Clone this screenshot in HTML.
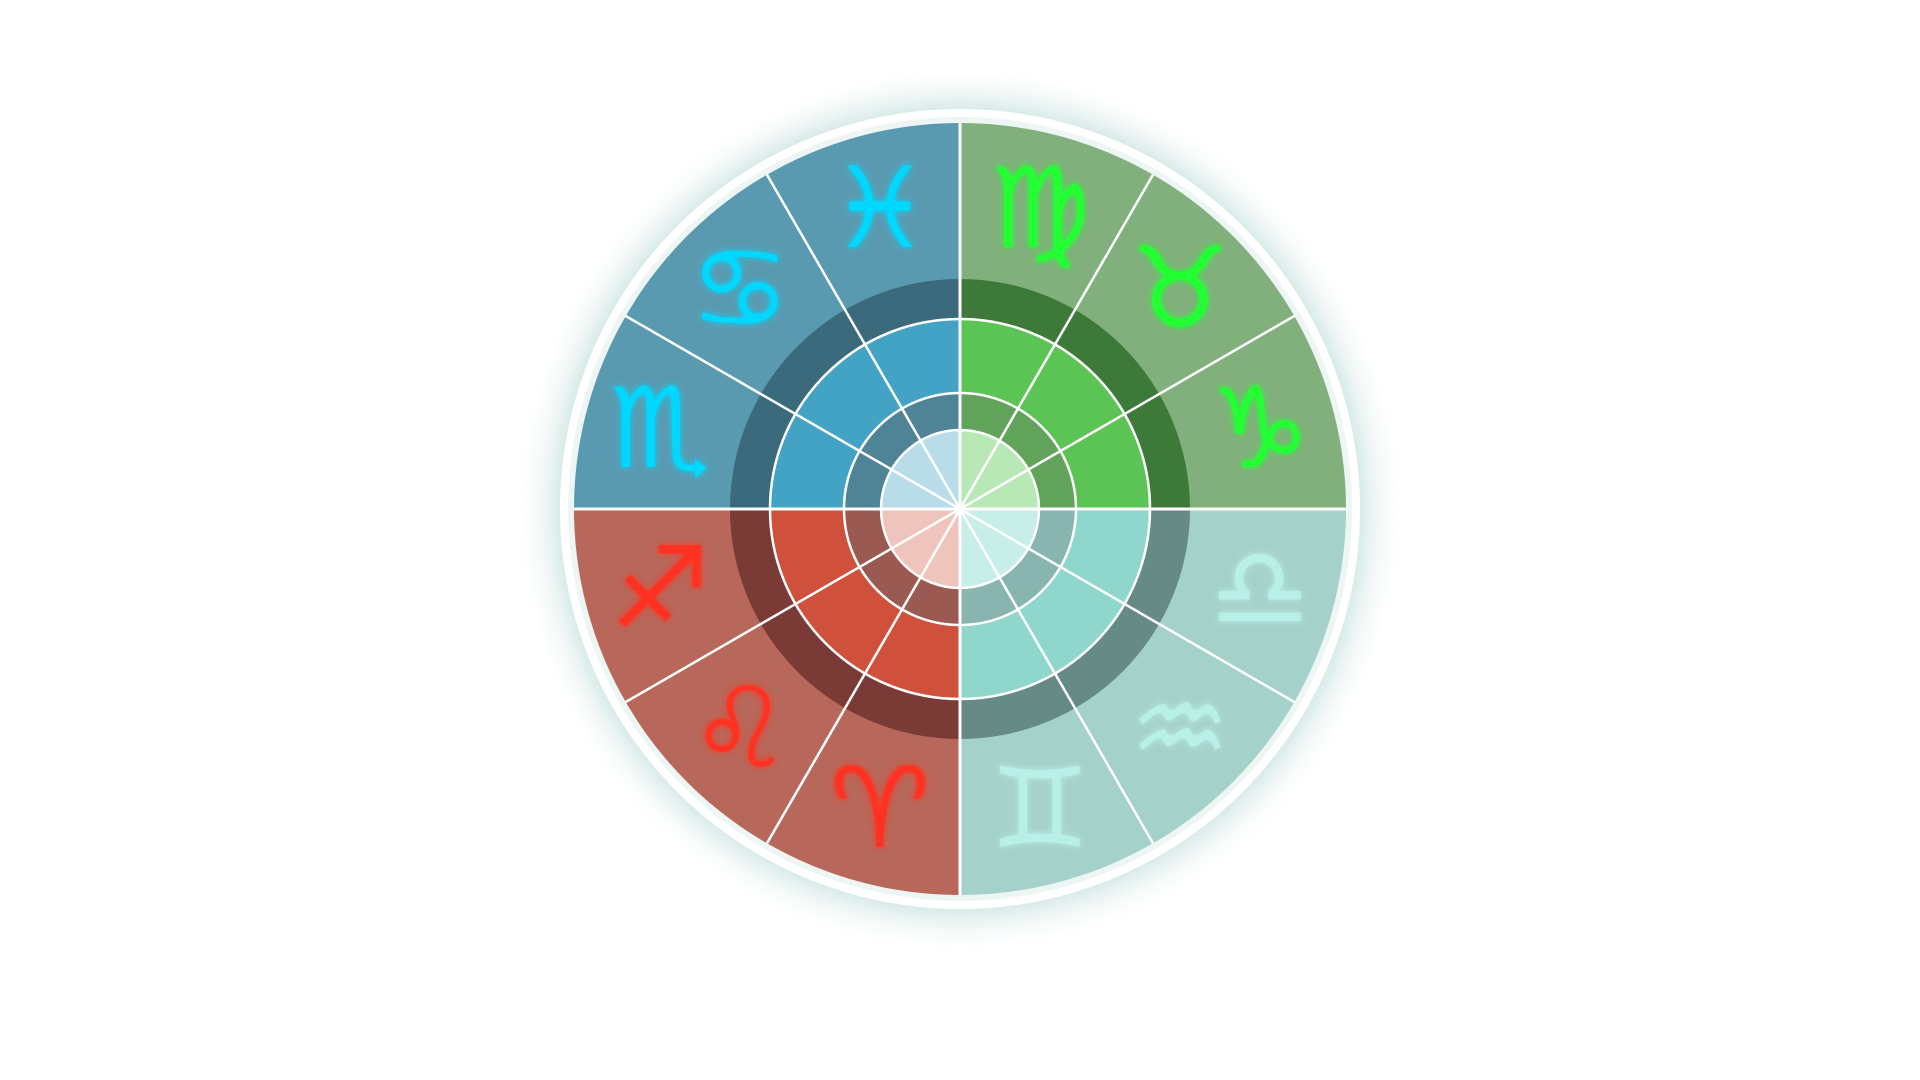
<!DOCTYPE html>
<html><head><meta charset="utf-8"><style>
html,body{margin:0;padding:0;background:#fff;width:1920px;height:1080px;overflow:hidden}
svg{display:block}
text{font-family:"DejaVu Sans",sans-serif;font-size:112px;text-anchor:middle;dominant-baseline:central}
</style></head><body>
<svg width="1920" height="1080" viewBox="0 0 1920 1080">
<defs>
<filter id="rim" x="-20%" y="-20%" width="140%" height="140%"><feGaussianBlur stdDeviation="16"/></filter>
<filter id="gl" x="-50%" y="-50%" width="200%" height="200%"><feGaussianBlur stdDeviation="3.5" result="b"/><feMerge><feMergeNode in="b"/><feMergeNode in="SourceGraphic"/></feMerge></filter>
</defs>
<circle cx="960" cy="509" r="408" fill="#c8e2df" filter="url(#rim)"/>
<circle cx="960" cy="509" r="400" fill="#fff"/>
<circle cx="960" cy="509" r="392" fill="#eef6f5"/>
<g transform="translate(960,509)">
<path d="M0 0L-386 0A386 386 0 0 1 0 -386Z" fill="#5a9ab0"/>
<path d="M0 0L0 -386A386 386 0 0 1 386 0Z" fill="#82b07c"/>
<path d="M0 0L386 0A386 386 0 0 1 0 386Z" fill="#a5d1cb"/>
<path d="M0 0L0 386A386 386 0 0 1 -386 0Z" fill="#b8685a"/>

<path d="M0 0L-230 0A230 230 0 0 1 0 -230Z" fill="#3a6a7c"/>
<path d="M0 0L0 -230A230 230 0 0 1 230 0Z" fill="#3d7a3a"/>
<path d="M0 0L230 0A230 230 0 0 1 0 230Z" fill="#668a85"/>
<path d="M0 0L0 230A230 230 0 0 1 -230 0Z" fill="#7a3a35"/>

<path d="M0 0L-190 0A190 190 0 0 1 0 -190Z" fill="#42a3c5"/>
<path d="M0 0L0 -190A190 190 0 0 1 190 0Z" fill="#5cc455"/>
<path d="M0 0L190 0A190 190 0 0 1 0 190Z" fill="#8fd6cc"/>
<path d="M0 0L0 190A190 190 0 0 1 -190 0Z" fill="#cf503b"/>

<path d="M0 0L-116 0A116 116 0 0 1 0 -116Z" fill="#4f8396"/>
<path d="M0 0L0 -116A116 116 0 0 1 116 0Z" fill="#62a35c"/>
<path d="M0 0L116 0A116 116 0 0 1 0 116Z" fill="#88b5b0"/>
<path d="M0 0L0 116A116 116 0 0 1 -116 0Z" fill="#9a5a52"/>

<path d="M0 0L-79 0A79 79 0 0 1 0 -79Z" fill="#b8dce8"/>
<path d="M0 0L0 -79A79 79 0 0 1 79 0Z" fill="#b8e8b5"/>
<path d="M0 0L79 0A79 79 0 0 1 0 79Z" fill="#c8eee9"/>
<path d="M0 0L0 79A79 79 0 0 1 -79 0Z" fill="#eec4bc"/>
<g fill="none" stroke="#fff" stroke-width="2.5">
<circle r="190"/><circle r="116"/><circle r="79"/>
<line x1="-386" y1="0" x2="386" y2="0" stroke-width="3"/>
<line x1="0" y1="-386" x2="0" y2="386" stroke-width="3"/>
<line x1="334.3" y1="-193" x2="-334.3" y2="193"/>
<line x1="193" y1="-334.3" x2="-193" y2="334.3"/>
<line x1="-193" y1="-334.3" x2="193" y2="334.3"/>
<line x1="-334.3" y1="-193" x2="334.3" y2="193"/>
</g>
<g filter="url(#gl)">
<text x="300" y="-80" fill="#22ff33">♑</text>
<text x="220" y="-220" fill="#22ff33">♉</text>
<text x="80" y="-300" fill="#22ff33">♍</text>
<text x="-80" y="-300" fill="#00d8ff">♓</text>
<text x="-220" y="-220" fill="#00d8ff">♋</text>
<text x="-300" y="-80" fill="#00d8ff">♏</text>
<text x="-300" y="80" fill="#ff3322">♐</text>
<text x="-220" y="220" fill="#ff3322">♌</text>
<text x="-80" y="300" fill="#ff3322">♈</text>
<text x="80" y="300" fill="#b8f0e8">♊</text>
<text x="220" y="220" fill="#b8f0e8">♒</text>
<text x="300" y="80" fill="#b8f0e8">♎</text>
</g>
</g>
</svg>
</body></html>
